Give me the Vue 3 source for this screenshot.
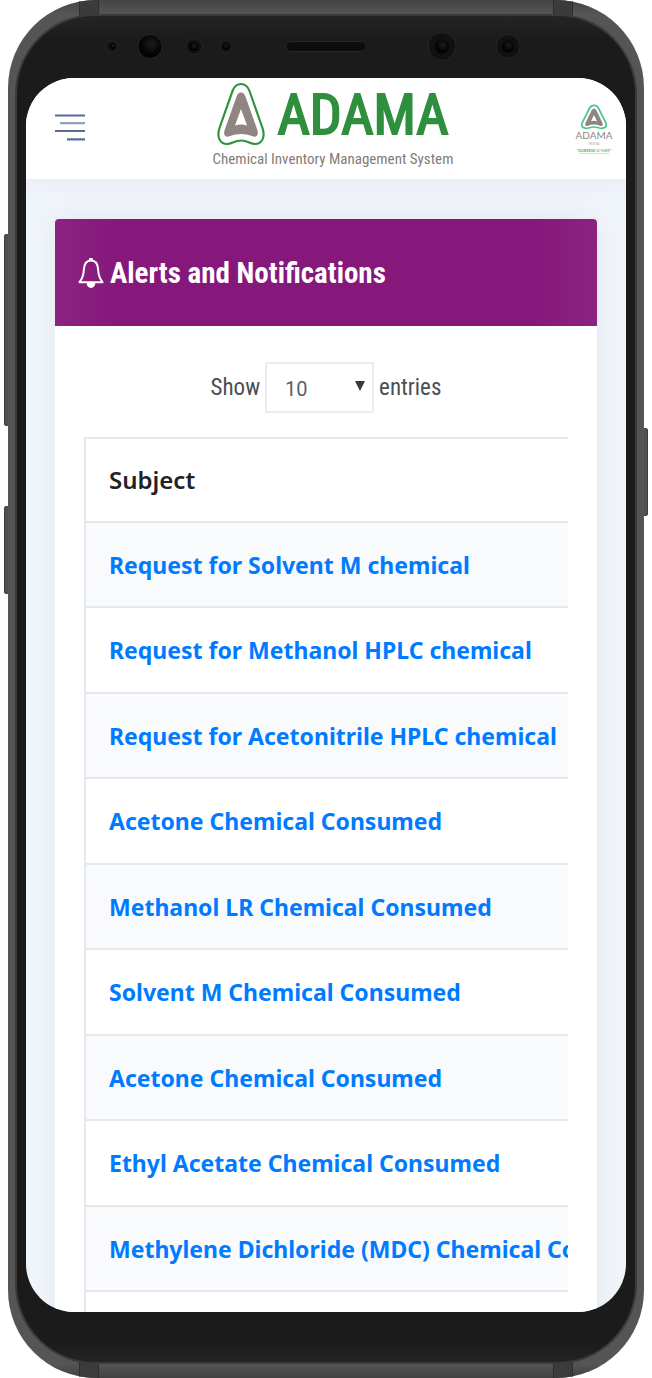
<script setup>
import { ref } from 'vue'

const pageSize = ref('10')
const alerts = [
  'Request for Solvent M chemical',
  'Request for Methanol HPLC chemical',
  'Request for Acetonitrile HPLC chemical',
  'Acetone Chemical Consumed',
  'Methanol LR Chemical Consumed',
  'Solvent M Chemical Consumed',
  'Acetone Chemical Consumed',
  'Ethyl Acetate Chemical Consumed',
  'Methylene Dichloride (MDC) Chemical Consumed',
]
</script>

<template>
  <div class="stage">
    <span class="key volume"></span>
    <span class="key assistant"></span>
    <span class="key power"></span>
    <div class="phone">
      <i class="seam top left"></i>
      <i class="seam top right"></i>
      <i class="seam bottom left"></i>
      <i class="seam bottom right"></i>
      <div class="bezel">
        <svg class="sensors" viewBox="0 0 600 61" aria-hidden="true">
          <defs>
            <radialGradient id="lens" cx=".55" cy=".4" r=".6">
              <stop offset="0" stop-color="#1d1d1d" />
              <stop offset=".7" stop-color="#040404" />
              <stop offset="1" stop-color="#000" />
            </radialGradient>
          </defs>
          <g fill="#111" stroke="#272727">
            <circle cx="86" cy="30" r="5.5" />
            <circle cx="168" cy="30" r="8" />
            <circle cx="200" cy="30" r="6" />
            <circle cx="416" cy="30" r="14" />
            <circle cx="482" cy="30" r="12" />
            <rect x="260" y="25" width="80" height="10" rx="5" fill="#0d0d0d" />
            <circle cx="124" cy="30" r="12" fill="url(#lens)" />
          </g>
          <g fill="url(#lens)">
            <circle cx="87" cy="29.500" r="3" />
            <circle cx="168" cy="30" r="4.500" />
            <circle cx="200" cy="30" r="3.500" />
            <circle cx="416" cy="30" r="7" />
            <circle cx="482" cy="30" r="6" />
          </g>
        </svg>
        <div class="screen">
          <header class="topbar">
            <button class="menu" aria-label="Toggle menu">
              <svg width="30" height="28" viewBox="0 0 30 28" stroke="#5b6b98" stroke-width="2.2">
                <path d="M0 2.500H30M0 18H30M12 26.300H30" />
                <path d="M5 10.200H30" stroke="#95a0bd" />
              </svg>
            </button>
            <div class="brand">
              <div class="brand-row">
                <svg class="mark" width="48" height="64" viewBox="0 0 48 64">
                  <path d="M24 2C19 2 17 5 15.500 9L2.500 46C-.5 55 3 62 10 62C15 62 17 58.500 24 58.500S33 62 38 62C45 62 48.500 55 45.500 46L32.500 9C31 5 29 2 24 2Z" fill="none" stroke="#2f9440" stroke-width="2.200" />
                  <path fill-rule="evenodd" d="M24 10.500C21 10.500 20 13 19 16L8 47C5.500 53.500 9 56 13 54Q24 50 35 54C39 56 42.500 53.500 40 47L29 16C28 13 27 10.500 24 10.500ZM24 27L30 43.500Q24 41.500 18 43.500Z" fill="#8f8583" />
                </svg>
                <span class="name">ADAMA</span>
              </div>
              <span class="tagline">Chemical Inventory Management System</span>
            </div>
            <div class="profile">
              <svg width="28" height="26" viewBox="0 0 28 26">
                <path d="M14 1.300Q11 1.300 9.600 4L2.300 18.500C.5 22.500 3 24.300 6.500 24.300C9 24.300 10 23 14 23S19 24.300 21.500 24.300C25 24.300 27.500 22.500 25.700 18.500L18.400 4Q17 1.300 14 1.300Z" fill="none" stroke="#4bc68a" stroke-width="1.700" />
                <path fill-rule="evenodd" d="M14 4.500Q12.500 4.500 11.500 6.500L5.500 19C4.500 21.500 6 22.500 8 21.700Q14 19.500 20 21.700C22 22.500 23.500 21.500 22.500 19L16.500 6.500Q15.500 4.500 14 4.500ZM14 11L17 17.200Q14 16.300 11 17.200Z" fill="#8f8583" />
              </svg>
              <span class="p-name">ADAMA</span>
              <span class="p-country">INDIA</span>
              <span class="p-motto">"SUBEESE O YUM"</span>
              <i class="p-line"></i>
            </div>
          </header>
          <main>
            <section class="card">
              <h1>
                <svg width="26" height="32" viewBox="0 0 26 32" fill="none" stroke="#fff" stroke-width="2">
                  <path d="M13 3.500C7 3.500 6 8 5.800 13C5.600 19 4 22 1.500 25.200H24.500C22 22 20.400 19 20.200 13C20 8 19 3.500 13 3.500Z" stroke-linejoin="round" />
                  <path d="M11.500 3V1.500H14.500V3ZM9 26.500Q9.500 30.500 13 30.500T17 26.500Z" fill="#fff" stroke-width="1" />
                </svg>
                Alerts and Notifications
              </h1>
              <div class="body">
                <label class="length">
                  Show
                  <span class="picker">
                    <select v-model="pageSize">
                      <option>10</option>
                      <option>25</option>
                      <option>50</option>
                      <option>100</option>
                    </select>
                    <svg width="10" height="10" viewBox="0 0 10 10"><path d="M0 0H10L5 10Z" fill="#343a40" /></svg>
                  </span>
                  entries
                </label>
                <div class="scroller">
                  <table>
                    <thead>
                      <tr><th scope="col">Subject</th></tr>
                    </thead>
                    <tbody>
                      <tr v-for="(subject, i) in alerts" :key="i">
                        <td><a href="#">{{ subject }}</a></td>
                      </tr>
                      <tr><td></td></tr>
                    </tbody>
                  </table>
                </div>
              </div>
            </section>
          </main>
        </div>
      </div>
    </div>
  </div>
</template>

<style>
body {
  background: #fff;
}
</style>

<style scoped>
* {
  box-sizing: border-box;
}
.stage {
  position: relative;
  height: 100vh;
  padding: 0 8px;
  overflow: hidden;
  font-family: 'Roboto Condensed', 'Liberation Sans Narrow', Roboto, sans-serif;
}
.phone {
  position: relative;
  height: 100%;
  padding: 14px 7px;
  border-radius: 88px;
  overflow: hidden;
  background: linear-gradient(#444, #555 14px, #555 calc(100% - 14px), #414141);
}
.seam {
  position: absolute;
  width: 20px;
  height: 16px;
  background: #3b3b3b;
  border: solid #2e2e2e;
  border-width: 0 1px;
}
.top { top: 0; }
.bottom { bottom: 0; }
.left { left: 71px; }
.right { right: 71px; }
.key {
  position: absolute;
  width: 5px;
  background: #505050;
  border: 1px solid #3e3e3e;
  border-radius: 2px;
}
.volume { left: 4px; top: 234px; height: 192px; }
.assistant { left: 4px; top: 506px; height: 88px; }
.power { right: 4px; top: 428px; height: 88px; }
.bezel {
  position: relative;
  height: 100%;
  display: flex;
  flex-direction: column;
  padding: 0 9px 50px;
  border: 2px solid #3a3a3a;
  border-radius: 80px;
  background: linear-gradient(#242424, #1b1b1b 24px, #1b1b1b calc(100% - 20px), #242424);
}
.sensors {
  display: block;
  flex: none;
  width: 100%;
  height: 62px;
}
.screen {
  flex: 1;
  min-height: 0;
  overflow: hidden;
  border-radius: 48px;
  background: #f0f5f9;
}
.topbar {
  position: relative;
  height: 101px;
  display: flex;
  justify-content: space-between;
  align-items: flex-start;
  padding: 0 13px 0 29px;
  background: #fff;
  box-shadow: 0 0 24px #e4e6f2;
}
.menu {
  margin: 35px 6px 0 0;
  padding: 0;
  border: 0;
  background: none;
}
.menu svg {
  display: block;
}
.brand {
  display: flex;
  flex-direction: column;
  align-items: center;
  padding-top: 4px;
}
.brand-row {
  display: flex;
  gap: 12px;
  height: 64px;
}
.name {
  color: #2f8f3e;
  -webkit-text-stroke: 2px #2f8f3e;
  stroke-linejoin: round;
  font-size: 56px;
  font-weight: 400;
  line-height: 66px;
}
.tagline {
  color: #857b79;
  font-size: 15px;
  font-weight: 400;
  line-height: 26px;
}
.profile {
  display: flex;
  flex-direction: column;
  align-items: center;
  width: 38px;
  padding-top: 26px;
  white-space: nowrap;
}
.p-name {
  color: #8f8583;
  font: 10px/10px Lato, sans-serif;
}
.p-country {
  color: #b0a8a6;
  font: 4px/8px Lato, sans-serif;
}
.p-motto {
  color: #3fbd7d;
  font: bold 4px/5px Lato, sans-serif;
}
.p-line {
  width: 30px;
  height: 1px;
  background: #c5e5d6;
}
main {
  padding: 40px 29px 0;
}
.card {
  border-radius: 4px;
  background: #fff;
  box-shadow: 0 0 24px #e3e6f2;
}
h1 {
  display: flex;
  align-items: center;
  gap: 6px;
  height: 107px;
  margin: 0;
  padding: 0 23px;
  border-radius: 4px 4px 0 0;
  background: linear-gradient(90deg, #8b2380, #86187c 60px, #86187c calc(100% - 60px), #8b2380);
  color: #fff;
  font-size: 29px;
  font-weight: 700;
  line-height: 36px;
  white-space: nowrap;
}
.body {
  padding: 36px 29px 29px;
}
.length {
  display: flex;
  justify-content: center;
  align-items: center;
  gap: 5px;
  color: #4a4f54;
  font-size: 23px;
}
.picker {
  position: relative;
  width: 109px;
}
.picker select {
  display: block;
  width: 100%;
  height: 51px;
  padding: 3px 18px 0;
  appearance: none;
  border: 2px solid #e9ecf0;
  border-radius: 0;
  background: #fff;
  color: #5a6068;
  font: 20px Roboto, sans-serif;
}
.picker svg {
  position: absolute;
  top: 19px;
  right: 9px;
}
.scroller {
  margin-top: 24px;
  overflow: hidden;
}
table {
  width: 140%;
  border-collapse: separate;
  border-spacing: 0;
  border: solid #e5e9ed;
  border-width: 2px 0 0 2px;
  font-family: 'Noto Sans', sans-serif;
  font-size: 23px;
  line-height: 30px;
  text-align: left;
  white-space: nowrap;
}
th,
td {
  height: 85px;
  padding: 0 23px;
  border-bottom: 2px solid #e5e9ed;
}
th {
  height: 84px;
  color: #1f2328;
  font-size: 24px;
  font-weight: 600;
}
tbody tr:nth-child(odd) {
  background: #f8fafc;
}
tbody tr:nth-child(even) td {
  height: 86px;
}
a {
  color: #007bff;
  font-weight: 700;
  text-decoration: none;
}
</style>
